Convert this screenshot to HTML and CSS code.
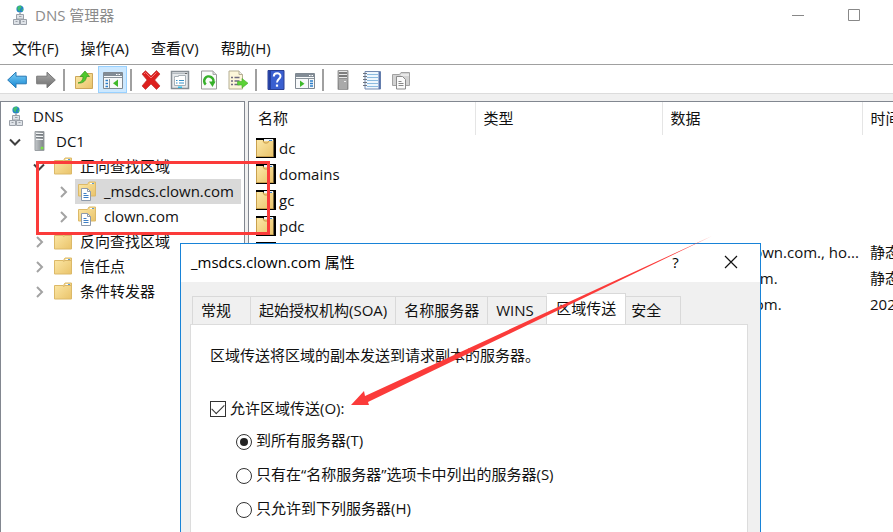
FILE: index.html
```
<!DOCTYPE html>
<html lang="zh-CN">
<head>
    <meta charset="UTF-8">
    <meta name="viewport" content="width=device-width, initial-scale=1.0">
    <title>DNS 管理器</title>
    <link rel="stylesheet" href="styles.css">
</head>
<body>
    <!-- Shared icons -->
    <svg class="defs" width="0" height="0">
        <defs>
            <linearGradient id="gold" x1="0" y1="0" x2="1" y2="1">
                <stop offset="0" stop-color="#fde9a9"/>
                <stop offset="1" stop-color="#e9c36a"/>
            </linearGradient>
            <linearGradient id="steel" x1="0" y1="0" x2="1" y2="0">
                <stop offset="0" stop-color="#c4c8cb"/>
                <stop offset="1" stop-color="#7c8285"/>
            </linearGradient>
            <linearGradient id="blue" x1="0" y1="0" x2="0" y2="1">
                <stop offset="0" stop-color="#7fd0f8"/>
                <stop offset="1" stop-color="#1587d2"/>
            </linearGradient>
            <linearGradient id="grey" x1="0" y1="0" x2="0" y2="1">
                <stop offset="0" stop-color="#aaa"/>
                <stop offset="1" stop-color="#6e6e6e"/>
            </linearGradient>
            <symbol id="i-dns" viewBox="0 0 18 20">
                <circle cx="9" cy="4" r="3.6" fill="#2583c8"/>
                <path d="M7 1.2l3-.6.6 2-1.800 1.600.2 2.200-2-1.200-.8-2zM11 4l1.400.4-.9 2-1-.8z" fill="#3fbf6b"/>
                <path d="M9 7.500v2" stroke="#888" stroke-width="1.200"/>
                <g fill="#dfe3e8" stroke="#9aa0a8">
                    <path d="M5.500 9.500h7v4.500h-7zM2.500 14.500h6v5h-6zM9.500 14.500h6v5h-6z"/>
                    <path d="M8 11.500h2.500M4.500 16.500h2M11.500 16.500h2"/>
                </g>
            </symbol>
            <symbol id="i-server" viewBox="0 0 18 20">
                <path d="M5 .5h9v19H5z" fill="url(#steel)" stroke="#9a9fa3"/>
                <path d="M6 2.500h7M6 5.500h7M6 8.500h7" stroke="#f3f5f6"/>
                <path d="M6 3.500h7M6 6.500h7" stroke="#777d82"/>
                <circle cx="12" cy="17" r="1.500" fill="#7be04a"/>
            </symbol>
            <symbol id="i-folder" viewBox="0 0 18 18">
                <path d="M.5 3.500h9l1.500-2.500h6.500v16H.5z" fill="url(#gold)" stroke="#dcb968"/>
                <path d="M11.500 2.500h4" stroke="#fff"/>
                <path d="M14 2.500h2" stroke="#5b9bd5"/>
                <path d="M9.500 5l1-1.500h6.500" fill="none" stroke="#d9b566"/>
            </symbol>
            <symbol id="i-zone" viewBox="0 0 18 20">
                <path d="M.5 3.500h9l1.500-2.500h6.500v14H.5z" fill="url(#gold)" stroke="#dcb968"/>
                <path d="M12 2.500h2" stroke="#fff"/>
                <path d="M14 2.500h2" stroke="#5b9bd5"/>
                <path d="M3.500 7.500h6l3 3v9h-9z" fill="#fff" stroke="#8e9aab"/>
                <path d="M9.500 7.500v3h3" fill="none" stroke="#8e9aab"/>
                <path d="M5.500 12.500h3M5.500 14.500h5M5.500 16.500h5" stroke="#3f7fc4"/>
            </symbol>
            <symbol id="i-record" viewBox="0 0 20 20">
                <path d="M0 0h20v20H0z" fill="#000"/>
                <path d="M0 2h7l2 2.500h1.500l1.500-3h5.500v17H0z" fill="url(#gold)"/>
                <path d="M8 1h9v2H8z" fill="#f1f4f6"/>
                <path d="M13 2.500h3" stroke="#3f86cf"/>
                <path d="M7 3l1.500 2h3l1.500-2" fill="#f3d488" stroke="#c79a45"/>
                <path d="M.5 2v16.500h17" fill="none" stroke="#c9a04d"/>
            </symbol>
            <symbol id="i-open" viewBox="0 0 16 16">
                <path d="M3 5.500l5 5 5-5" fill="none" stroke="#404040" stroke-width="2"/>
            </symbol>
            <symbol id="i-closed" viewBox="0 0 16 16">
                <path d="M6 3l5 5-5 5" fill="none" stroke="#a3a3a3" stroke-width="2"/>
            </symbol>
        </defs>
    </svg>

    <div class="window">
        <header class="titlebar">
            <svg class="icon-dns" width="18" height="20"><use href="#i-dns"/></svg>
            <span class="title">DNS 管理器</span>
            <button class="win-btn" aria-label="最小化"><svg width="12" height="12"><path d="M0 6.500h12" stroke="#888"/></svg></button>
            <button class="win-btn" aria-label="最大化"><svg width="12" height="12"><path d="M.5.5h11v11H.5z" fill="none" stroke="#888"/></svg></button>
        </header>

        <nav class="menubar">
            <button>文件(F)</button>
            <button>操作(A)</button>
            <button>查看(V)</button>
            <button>帮助(H)</button>
        </nav>

        <div class="toolbar">
            <button aria-label="后退"><svg width="20" height="20" viewBox="0 0 20 20"><path d="M.7 10L9 2.200v4h10.300v7.600H9v4z" fill="url(#blue)" stroke="#2578b5"/></svg></button>
            <button aria-label="前进"><svg width="20" height="20" viewBox="0 0 20 20"><path d="M19.300 10L11 2.200v4H.7v7.600H11v4z" fill="url(#grey)" stroke="#777"/></svg></button>
            <span class="sep"></span>
            <button aria-label="上一级">
                <svg width="20" height="20" viewBox="0 0 20 20">
                    <path d="M1.500 6.500h10l1.500-3h5.500v15h-17z" fill="url(#gold)" stroke="#cda75a"/>
                    <path d="M4 13c4-1 5-4 5-6.500H6L11 1l4.500 5.500H12.500C12 11 9 13.500 4 13z" fill="#4fc92c" stroke="#35961c" stroke-width=".7"/>
                </svg>
            </button>
            <button class="on" aria-label="显示树">
                <svg width="20" height="20" viewBox="0 0 20 20">
                    <path d="M.5 2.500h19v16H.5z" fill="#f7f9fa" stroke="#7f8891"/>
                    <path d="M1 3h18v3H1z" fill="#828c96"/>
                    <path d="M13 4.500h1.500M15.500 4.500H17" stroke="#fff"/>
                    <path d="M1 7.500h18M6.500 9v9" stroke="#8a939b"/>
                    <path d="M2.500 10.500H5M2.500 13.500H5M2.500 16.500H5" stroke="#2d7fca" stroke-width="1.500"/>
                    <path d="M15 9.500v7.500L10 13.200z" fill="#3fb92a"/>
                </svg>
            </button>
            <span class="sep"></span>
            <button aria-label="删除"><svg width="20" height="20" viewBox="0 0 20 20"><path d="M1 4l3.500-3.300L10 6l5.500-5.500L19 4l-5.300 6L19 16l-3.500 3.500L10 14l-5.500 5.500L1 16l5-6z" fill="#dd201e" stroke="#b52a2a" stroke-width=".6"/><path d="M3 4l1.500-1.500L10 8l5.500-5.500" fill="none" stroke="#f3797a"/></svg></button>
            <button aria-label="属性">
                <svg width="20" height="20" viewBox="0 0 20 20">
                    <path d="M1.500 1.500h17v17h-17z" fill="#e6e9eb" stroke="#868d93" stroke-width="1.500"/>
                    <path d="M2 3.500h16" stroke="#b3bac0"/>
                    <path d="M15 3.500h2" stroke="#666"/>
                    <path d="M4.500 8.500v-2h4v-1h7v10h-11z" fill="#fff" stroke="#a8b0b6"/>
                    <path d="M6 10.500h1.500M9 10.500h5M6 13h1.500M9 13h5" stroke="#3a93c9"/>
                    <path d="M8 16.500h4v1.500H8z" fill="#30bce8"/>
                </svg>
            </button>
            <button aria-label="刷新">
                <svg width="20" height="20" viewBox="0 0 20 20">
                    <path d="M2.500 1h11.500l3.500 3.500v14.500h-15z" fill="#fbfbfb" stroke="#999"/>
                    <path d="M14 1v3.500h3.500" fill="#ddd" stroke="#aaa"/>
                    <path d="M6.800 14.500a4.600 4.600 0 1 1 7.200-1.500" fill="none" stroke="#37b02a" stroke-width="2.600"/>
                    <path d="M10 11.500h6.500L13.500 17z" fill="#37b02a"/>
                </svg>
            </button>
            <button aria-label="导出列表">
                <svg width="20" height="20" viewBox="0 0 20 20">
                    <path d="M1 1h10l3.500 3.500v14.500H1z" fill="#fcf6da" stroke="#b5ae93"/>
                    <path d="M11 1v3.500h3.500" fill="#eee" stroke="#b5ae93"/>
                    <path d="M3 7.500h2M6.500 7.500h5M3 11h2M6.500 11h5M3 14.500h2M6.500 14.500h5" stroke="#6f6a80" stroke-width="1.300"/>
                    <path d="M9.500 11.500h4.500V8.500l6 4.700-6 4.800v-3H9.500z" fill="#5cd236" stroke="#48ac2b" stroke-width=".6"/>
                </svg>
            </button>
            <span class="sep"></span>
            <button aria-label="帮助">
                <svg width="20" height="20" viewBox="0 0 20 20">
                    <path d="M2 .5h16v19H2z" fill="#3a5fd0" stroke="#2b3f93"/>
                    <path d="M2.500 1h2.500v18H2.500z" fill="#243f9f"/>
                    <path d="M7.800 6.500c0-4.300 6.700-4.200 6.700-.3 0 2.800-3.500 2.900-3.500 6.300" fill="none" stroke="#fff" stroke-width="2"/>
                    <path d="M9.900 14.500h2.200v2.200H9.900z" fill="#fff"/>
                </svg>
            </button>
            <button aria-label="显示操作窗格">
                <svg width="20" height="20" viewBox="0 0 20 20">
                    <path d="M.5 3.500h19v15H.5z" fill="#f7f9fa" stroke="#7f8891"/>
                    <path d="M1 4h18v3H1z" fill="#828c96"/>
                    <path d="M14 5.500h1.500M16.500 5.500H18" stroke="#fff"/>
                    <path d="M1 8.500h18M13.500 9v9" stroke="#8a939b"/>
                    <path d="M15 11h3M15 13.500h3M15 16h3" stroke="#2d7fca" stroke-width="1.500"/>
                    <path d="M5 10.500v6.500l4.500-3.200z" fill="#3fb92a"/>
                </svg>
            </button>
            <span class="sep"></span>
            <button aria-label="新建服务器">
                <svg width="20" height="20" viewBox="0 0 20 20">
                    <path d="M5 .5h10v19H5z" fill="url(#grey)" stroke="#9c9c9c"/>
                    <path d="M6 1.500h8M6 4.500h8M6 7.500h8" stroke="#e8e8e8"/>
                    <path d="M6 3h8M6 6h8" stroke="#5c5c5c"/>
                    <path d="M6 9h8v10H6z" fill="#aaa"/>
                    <path d="M11 11.500h2" stroke="#eee"/>
                </svg>
            </button>
            <button aria-label="新建区域">
                <svg width="20" height="20" viewBox="0 0 20 20">
                    <path d="M3 1.500h15.500v17.500H3z" fill="#eef6fd" stroke="#7289b0"/>
                    <path d="M17.500 2v17" stroke="#5672ab" stroke-width="2"/>
                    <path d="M5 4.500h11M5 7.500h11M5 10.500h11M5 13.500h11M5 16.500h11" stroke="#8cbbe0"/>
                    <path d="M1 3.500h4M1 6.500h4M1 9.500h4M1 12.500h4M1 15.500h4" stroke="#6c7480"/>
                </svg>
            </button>
            <button aria-label="新建记录">
                <svg width="20" height="20" viewBox="0 0 20 20">
                    <path d="M1.500 4.500h7l1.500-2h8.500v13h-17z" fill="#d2d2d2" stroke="#a2a2a2"/>
                    <path d="M10 5h8" stroke="#fff"/>
                    <path d="M5.500 6.500h6l3 3v9.500h-9z" fill="#fafafa" stroke="#8b8b8b"/>
                    <path d="M7.500 11.500h3M7.500 13.500h5M7.500 15.500h5" stroke="#888"/>
                </svg>
            </button>
        </div>

        <main class="panes">
            <ul class="tree">
                <li>
                    <div class="node"><span class="label"><svg width="18" height="20"><use href="#i-dns"/></svg>DNS</span></div>
                </li>
                <li>
                    <div class="node">
                        <button class="toggle" aria-label="折叠"><svg width="16" height="16"><use href="#i-open"/></svg></button>
                        <span class="label"><svg width="18" height="20"><use href="#i-server"/></svg>DC1</span>
                    </div>
                    <ul>
                        <li>
                            <div class="node">
                                <button class="toggle" aria-label="折叠"><svg width="16" height="16"><use href="#i-open"/></svg></button>
                                <span class="label"><svg width="18" height="18"><use href="#i-folder"/></svg>正向查找区域</span>
                            </div>
                            <ul>
                                <li>
                                    <div class="node">
                                        <button class="toggle" aria-label="展开"><svg width="16" height="16"><use href="#i-closed"/></svg></button>
                                        <span class="label selected"><svg width="18" height="20"><use href="#i-zone"/></svg>_msdcs.clown.com</span>
                                    </div>
                                </li>
                                <li>
                                    <div class="node">
                                        <button class="toggle" aria-label="展开"><svg width="16" height="16"><use href="#i-closed"/></svg></button>
                                        <span class="label"><svg width="18" height="20"><use href="#i-zone"/></svg>clown.com</span>
                                    </div>
                                </li>
                            </ul>
                        </li>
                        <li>
                            <div class="node">
                                <button class="toggle" aria-label="展开"><svg width="16" height="16"><use href="#i-closed"/></svg></button>
                                <span class="label"><svg width="18" height="18"><use href="#i-folder"/></svg>反向查找区域</span>
                            </div>
                        </li>
                        <li>
                            <div class="node">
                                <button class="toggle" aria-label="展开"><svg width="16" height="16"><use href="#i-closed"/></svg></button>
                                <span class="label"><svg width="18" height="18"><use href="#i-folder"/></svg>信任点</span>
                            </div>
                        </li>
                        <li>
                            <div class="node">
                                <button class="toggle" aria-label="展开"><svg width="16" height="16"><use href="#i-closed"/></svg></button>
                                <span class="label"><svg width="18" height="18"><use href="#i-folder"/></svg>条件转发器</span>
                            </div>
                        </li>
                    </ul>
                </li>
            </ul>

            <div class="list">
                <table>
                    <colgroup>
                        <col class="col-name">
                        <col class="col-type">
                        <col class="col-data">
                        <col class="col-time">
                    </colgroup>
                    <thead>
                        <tr><th>名称</th><th>类型</th><th>数据</th><th>时间</th></tr>
                    </thead>
                    <tbody>
                        <tr><td><span class="record"><svg width="20" height="20"><use href="#i-record"/></svg>dc</span></td><td></td><td></td><td></td></tr>
                        <tr><td><span class="record"><svg width="20" height="20"><use href="#i-record"/></svg>domains</span></td><td></td><td></td><td></td></tr>
                        <tr><td><span class="record"><svg width="20" height="20"><use href="#i-record"/></svg>gc</span></td><td></td><td></td><td></td></tr>
                        <tr><td><span class="record"><svg width="20" height="20"><use href="#i-record"/></svg>pdc</span></td><td></td><td></td><td></td></tr>
                        <tr><td><span class="record"><svg width="20" height="20"><use href="#i-record"/></svg></span></td><td></td><td>[114], dc1.clown.com., ho...</td><td>静态</td></tr>
                        <tr><td></td><td></td><td>dc1.clown.com.</td><td>静态</td></tr>
                        <tr><td></td><td></td><td>DC1.clown.com.</td><td>2021</td></tr>
                    </tbody>
                </table>
            </div>
        </main>

        <section class="dialog" role="dialog" aria-label="_msdcs.clown.com 属性">
            <div class="dialog-title">
                <span class="dialog-name">_msdcs.clown.com 属性</span>
                <button class="dialog-btn">?</button>
                <button class="dialog-btn" aria-label="关闭"><svg width="14" height="14"><path d="M1 1l12 12M13 1L1 13" stroke="#111" stroke-width="1.200"/></svg></button>
            </div>
            <div class="dialog-body">
                <div class="tabs" role="tablist">
                    <button role="tab">常规</button>
                    <button role="tab">起始授权机构(SOA)</button>
                    <button role="tab">名称服务器</button>
                    <button role="tab">WINS</button>
                    <button role="tab" class="active">区域传送</button>
                    <button role="tab">安全</button>
                </div>
                <form class="page">
                    <p>区域传送将区域的副本发送到请求副本的服务器。</p>
                    <label class="check"><input type="checkbox" checked>允许区域传送(O):</label>
                    <div class="options">
                        <label><input type="radio" name="transfer" checked>到所有服务器(T)</label>
                        <label><input type="radio" name="transfer">只有在“名称服务器”选项卡中列出的服务器(S)</label>
                        <label><input type="radio" name="transfer">只允许到下列服务器(H)</label>
                    </div>
                </form>
            </div>
        </section>

        <!-- Callouts drawn over the window -->
        <div class="mark-box"></div>
        <svg class="mark-arrow" width="364" height="170" viewBox="0 0 364 170">
            <path d="M0 169L13 155L14 160L361 0L17 166L18 169z" fill="#fb3b3a"/>
        </svg>
    </div>
</body>
</html>
```

FILE: styles.css
```
* {
    box-sizing: border-box;
}

body {
    margin: 0;
    font-family: "Open Sans", "Noto Sans CJK SC", sans-serif;
    font-size: 15px;
    line-height: 20px;
    color: #111;
    background-color: #fff;
}

button {
    margin: 0;
    padding: 0;
    border: none;
    background: none;
    font: inherit;
    color: inherit;
}

ul {
    list-style: none;
    margin: 0;
    padding: 0;
}

svg {
    display: block;
    flex: none;
}

.defs {
    position: absolute;
}

.window {
    position: relative;
    display: flex;
    flex-direction: column;
    height: 100vh;
    overflow: hidden;
}

/* Title bar and menu */
.titlebar {
    display: flex;
    align-items: center;
    height: 30px;
    padding: 0 11px;
    color: #8b8b8b;
}

.title {
    flex: 1;
    margin-left: 6px;
}

.win-btn {
    display: flex;
    justify-content: center;
    width: 56px;
}

.menubar {
    display: flex;
    gap: 22px;
    align-items: center;
    height: 35px;
    padding: 2px 12px 0;
    border-bottom: 1px solid #a0a0a0;
}

/* Toolbar */
.toolbar {
    display: flex;
    align-items: center;
    height: 29px;
    padding: 1px 0 0 2px;
    border-bottom: 1px solid #dcdcdc;
}

.toolbar button {
    display: flex;
    align-items: center;
    justify-content: center;
    width: 29px;
    height: 27px;
}

.toolbar .on {
    background-color: #cce8ff;
    border: 1px solid #99d1ff;
}

.sep {
    width: 2px;
    height: 22px;
    margin: 0 4px 0 3px;
    background-color: #a0a0a0;
}

/* Panes */
.panes {
    flex: 1;
    display: flex;
    gap: 3px;
    padding-top: 7px;
    min-height: 0;
    background-color: #f0f0f0;
}

.tree,
.list {
    background-color: #fff;
    border: 1px solid #828790;
    border-bottom: none;
}

.tree {
    flex: none;
    width: 245px;
    padding: 2px 3px 0 6px;
}

.tree ul {
    padding-left: 24px;
}

.node {
    display: flex;
    align-items: center;
    gap: 4px;
    height: 25px;
}

.toggle {
    width: 16px;
    height: 16px;
}

.label {
    display: flex;
    align-items: center;
    gap: 8px;
    height: 25px;
    padding: 0 7px 2px 3px;
    white-space: nowrap;
}

.label:first-child {
    padding-left: 0;
}

.selected {
    background-color: #d9d9d9;
}

.list {
    flex: 1;
    min-width: 0;
    overflow: hidden;
    border-right: none;
}

.list table {
    width: 100%;
    table-layout: fixed;
    border-collapse: collapse;
}

.col-name {
    width: 226px;
}

.col-type {
    width: 187px;
}

.col-data {
    width: 200px;
}

.list th {
    height: 33px;
    padding: 0 0 2px 8px;
    border-right: 1px solid #e5e5e5;
    font-weight: normal;
    text-align: left;
    white-space: nowrap;
}

.list th:first-child {
    padding-left: 9px;
}

.list th:last-child {
    border-right: none;
}

.list td {
    height: 26px;
    padding: 0 0 0 8px;
    white-space: nowrap;
}

.list td:first-child {
    padding-left: 7px;
}

.record {
    display: flex;
    align-items: center;
    gap: 3px;
}

/* Properties dialog */
.dialog {
    position: absolute;
    left: 180px;
    top: 243px;
    bottom: 0;
    width: 581px;
    display: flex;
    flex-direction: column;
    border: 1px solid #1883d7;
    border-bottom: none;
    background-color: #f0f0f0;
}

.dialog-title {
    display: flex;
    align-items: center;
    height: 38px;
    padding: 0 2px 2px 10px;
    background-color: #fff;
    color: #000;
}

.dialog-name {
    flex: 1;
}

.dialog-btn {
    display: flex;
    justify-content: center;
    width: 55px;
}

.dialog-body {
    flex: 1;
    display: flex;
    flex-direction: column;
    padding: 11px 12px 0 9px;
}

.tabs {
    display: flex;
    align-items: flex-end;
    padding-left: 2px;
}

.tabs button {
    min-width: 59px;
    height: 28px;
    padding: 0 8px 2px;
    border: 1px solid #d9d9d9;
    border-bottom: none;
    border-left: none;
    text-align: left;
    white-space: nowrap;
}

.tabs button:first-child {
    border-left: 1px solid #d9d9d9;
}

.tabs button:last-child {
    min-width: 55px;
    padding-left: 5px;
}

.tabs .active {
    height: 32px;
    margin-bottom: -1px;
    padding: 0 9px 4px;
    background-color: #fff;
}

.page {
    flex: 1;
    padding: 20px 19px 0;
    border: 1px solid #dcdcdc;
    border-bottom: none;
    background-color: #fff;
}

.page p {
    margin: 0 0 33px;
}

.page label {
    display: flex;
    align-items: center;
    gap: 4px;
    width: max-content;
}

.page input {
    appearance: none;
    flex: none;
    width: 16px;
    height: 16px;
    margin: 2px 0 0;
    border: 1px solid #333;
    background-color: #fff;
}

.page input[type="checkbox"]:checked::before {
    content: "";
    display: block;
    width: 11px;
    height: 6px;
    margin: 2px 1px;
    border-left: 1px solid #333;
    border-bottom: 1px solid #333;
    transform: rotate(-45deg);
}

.page input[type="radio"] {
    margin-top: 4px;
    border-radius: 50%;
}

.page input[type="radio"]:checked::before {
    content: "";
    display: block;
    width: 8px;
    height: 8px;
    margin: 3px;
    border-radius: 50%;
    background-color: #222;
}

.options {
    display: flex;
    flex-direction: column;
    gap: 14px;
    padding: 12px 0 0 26px;
}

/* Callouts */
.mark-box {
    position: absolute;
    left: 36px;
    top: 161px;
    width: 234px;
    height: 74px;
    border: 3px solid #fb3b3a;
}

.mark-arrow {
    position: absolute;
    left: 351px;
    top: 236px;
}
```
